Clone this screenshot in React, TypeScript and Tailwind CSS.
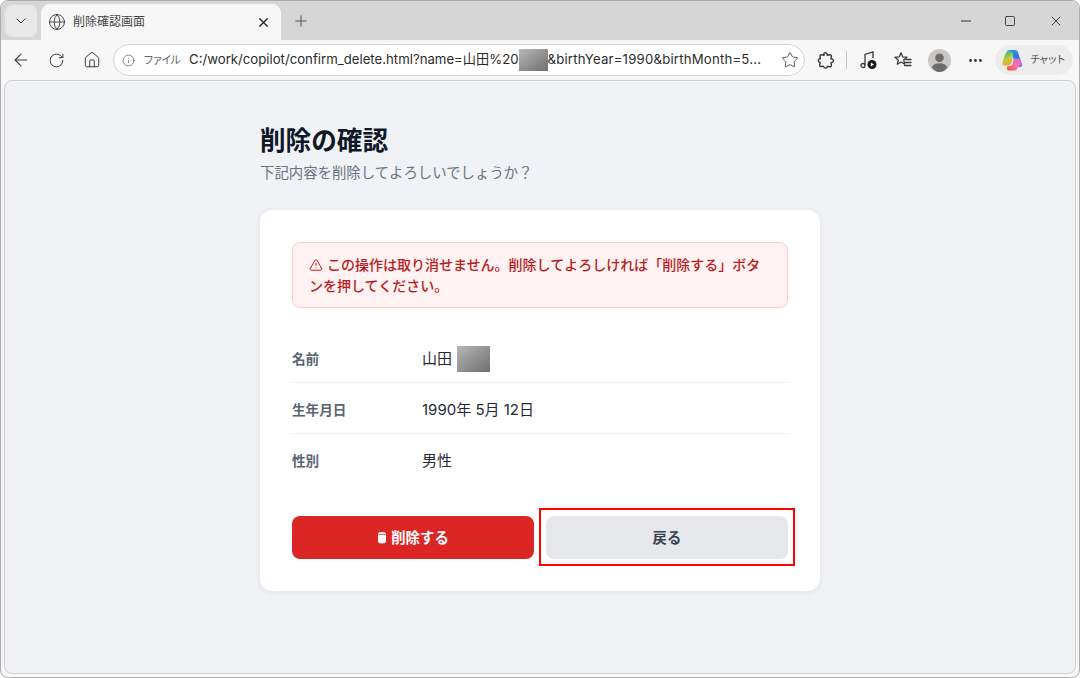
import { ArrowLeft, ChevronDown, Globe, Home, Info, Minus, MoreHorizontal, Plus, RotateCw, Square, Star, TriangleAlert, X } from "lucide-react";

const rows = [
  { label: "名前", value: "山田", redacted: true },
  { label: "生年月日", value: "1990年 5月 12日" },
  { label: "性別", value: "男性" },
];

function Redacted({ className }: { className: string }) {
  return <span className={`inline-block bg-gradient-to-br from-[#b8b8b8] to-[#6f6f6f] ${className}`} />;
}

function PuzzleIcon() {
  return (
    <svg width="18" height="18" viewBox="0 0 18 18" fill="none" stroke="#3a3a3a" strokeWidth="1.4" strokeLinejoin="round">
      <path d="M7 2.2c1.2-1 3-.4 3.2 1.2l.1.9 2.6-.5c1-.2 1.7.6 1.5 1.5l-.5 2.4 1 .2c1.8.4 2 2.9.3 3.5l-1.3.4.5 2.3c.2 1-.6 1.8-1.6 1.6l-2.3-.5-.4.9c-.6 1.5-3 1.4-3.4-.2l-.2-.8-2.2.4c-1 .2-1.8-.6-1.6-1.6l.5-2.4-.9-.4c-1.5-.7-1.3-3 .3-3.4l.8-.2-.4-2.2c-.2-1 .6-1.7 1.6-1.5l2.4.5z" />
    </svg>
  );
}

function MusicIcon() {
  return (
    <svg width="20" height="20" viewBox="0 0 20 20" fill="none" stroke="#3a3a3a" strokeWidth="1.3">
      <circle cx="4" cy="15.5" r="2" />
      <path d="M6 15.5V4.500L14 2v6" />
      <circle cx="13" cy="14.5" r="4.5" fill="#1a1a1a" stroke="none" />
      <path d="M11.8 12.500v4l3.2-2z" fill="#fff" stroke="none" />
    </svg>
  );
}

function FavoritesIcon() {
  return (
    <svg width="18" height="18" viewBox="0 0 18 18" fill="none" stroke="#3a3a3a" strokeWidth="1.3" strokeLinejoin="round">
      <path d="M7 1.8l1.700 4 4.300.4-3.300 2.800 1 4.200L7 11l-3.700 2.200 1-4.200L1 6.200l4.300-.4z" />
      <path d="M12 8.500h5M11.500 11.500h5.500M10.500 14.500h6.500" strokeLinecap="round" />
    </svg>
  );
}

function AvatarIcon() {
  return (
    <svg width="23" height="23" viewBox="0 0 23 23">
      <circle cx="11.5" cy="11.5" r="11.5" fill="#c9c6c3" />
      <circle cx="11.5" cy="8.8" r="4.3" fill="#6e6b69" />
      <path d="M3.800 18.500c1-3 4-4.300 7.700-4.300s6.700 1.300 7.700 4.300c-2 2.700-4.700 4.500-7.700 4.500s-5.700-1.800-7.700-4.500z" fill="#6e6b69" />
    </svg>
  );
}

function CopilotIcon() {
  return (
    <svg width="23" height="23" viewBox="0 0 23 23">
      <defs>
        <linearGradient id="copilotA" x1="0" y1="0" x2="1" y2="1">
          <stop offset="0" stopColor="#27b5e8" />
          <stop offset="0.55" stopColor="#2f6fe6" />
          <stop offset="1" stopColor="#9a55e0" />
        </linearGradient>
        <linearGradient id="copilotB" x1="0.2" y1="0" x2="0.6" y2="1">
          <stop offset="0" stopColor="#39b56a" />
          <stop offset="0.5" stopColor="#b8cf3f" />
          <stop offset="1" stopColor="#f5a52f" />
        </linearGradient>
        <linearGradient id="copilotC" x1="0" y1="1" x2="1" y2="0">
          <stop offset="0" stopColor="#f0503c" />
          <stop offset="0.55" stopColor="#f277a8" />
          <stop offset="1" stopColor="#c46ae0" />
        </linearGradient>
      </defs>
      <path d="M8 1h6c1.400 0 2.400.8 2.800 2.100l4.300 12.400c.4 1.300-.5 2.500-1.900 2.500h-4.400L11.300 5.300C10.900 4 10 3.300 8.600 3.300H5.500C5.900 2 6.800 1 8 1z" fill="url(#copilotA)" />
      <path d="M6.800 3.300h3.200c1.200 0 2 .6 2.300 1.800l-2 9c-.4 1.500-1.500 2.400-3 2.400H3.300C1.800 16.500.8 15.200 1.300 13.700L4.400 5c.4-1.100 1.300-1.700 2.400-1.700z" fill="url(#copilotB)" />
      <path d="M13 9.500h4.500c.9 0 1.500.5 1.800 1.300l.9 3c.5 1.600-.5 3-2 3.200l-2.500 3.300c-.6.800-1.300 1.200-2.200 1.200H7.800c-1.400 0-2.300-1.300-1.900-2.600l.7-1.900h1.900c1.500 0 2.700-.9 3.100-2.400z" fill="url(#copilotC)" />
    </svg>
  );
}

export default function App() {
  return (
    <div className="relative flex h-[678px] w-[1080px] flex-col overflow-hidden bg-white font-['Inter','Noto_Sans_CJK_JP',sans-serif]">
      {/* Window frame */}
      <div className="flex h-full flex-col overflow-hidden rounded-[8px] border border-[#ababab] bg-[#f7f7f7]">
        {/* Tab strip */}
        <div className="flex h-[39px] shrink-0 items-end bg-[#d6d6d6] pl-1">
          <div className="mb-[3px] flex h-[32px] w-[32px] items-center justify-center rounded-[8px] bg-[#e8e8e8]">
            <ChevronDown size={16} strokeWidth={1.5} color="#333" />
          </div>
          <div className="ml-[4px] flex h-[36px] w-[240px] items-center rounded-t-[9px] bg-[#f7f7f7] pl-[7px] pr-[10px]">
            <Globe size={18} strokeWidth={1.2} color="#3a3a3a" />
            <span className="ml-[7px] flex-1 text-[12px] text-[#444]">削除確認画面</span>
            <X size={15} strokeWidth={2} color="#222" />
          </div>
          <div className="ml-[11px] mb-[10px] flex h-[18px] w-[18px] items-center justify-center">
            <Plus size={20} strokeWidth={1.4} color="#555" />
          </div>
          <div className="mb-[11px] ml-auto flex items-center pr-[15px]">
            <Minus size={16} strokeWidth={1.5} color="#333" />
            <Square size={12} strokeWidth={1.8} color="#333" className="ml-[30px] rounded-[2px]" />
            <X size={16} strokeWidth={1.4} color="#333" className="ml-[32px]" />
          </div>
        </div>

        {/* Toolbar */}
        <div className="flex h-[40px] shrink-0 items-center pl-[10px]">
          <ArrowLeft size={20} strokeWidth={1.3} color="#3a3a3a" />
          <RotateCw size={17} strokeWidth={1.4} color="#3a3a3a" className="ml-[17px]" />
          <Home size={18} strokeWidth={1.3} color="#3a3a3a" className="ml-[18px]" />
          <div className="ml-[12px] flex h-[32px] w-[692px] items-center rounded-full border border-[#d2d2d2] bg-white pl-[8px] pr-[5px]">
            <Info size={13} strokeWidth={1.5} color="#666" />
            <span className="ml-[8px] w-[46px] text-[11px] tracking-[-2px] text-[#666]">ファイル</span>
            <span className="flex items-center text-[13.2px] whitespace-nowrap text-[#2b2b2b]">
              C:/work/copilot/confirm_delete.html?name=山田%20
              <Redacted className="h-[22px] w-[29px]" />
              <span className="tracking-[0.2px]">&amp;birthYear=1990&amp;birthMonth=5...</span>
            </span>
            <Star size={18} strokeWidth={1.3} color="#555" className="ml-auto" />
          </div>
          <div className="ml-[12px]"><PuzzleIcon /></div>
          <div className="ml-[11px] h-[18px] w-px bg-[#c4c4c4]" />
          <div className="ml-[12px]"><MusicIcon /></div>
          <div className="ml-[15px]"><FavoritesIcon /></div>
          <div className="ml-[16px]"><AvatarIcon /></div>
          <MoreHorizontal size={17} strokeWidth={2} color="#333" className="ml-[16px]" />
          <div className="ml-[11px] flex h-[30px] w-[78px] items-center rounded-full bg-[#ececec] pl-[6px]">
            <CopilotIcon />
            <span className="ml-[6px] text-[10.5px] tracking-[-2px] text-[#555]">チャット</span>
          </div>
        </div>

        {/* Page */}
        <div className="mx-[3px] mb-[3px] flex flex-1 justify-center rounded-[8px] border border-[#cfcfcf] bg-[#f0f2f6]">
          <div className="w-[560px] pt-[43px]">
            <h1 className="text-[25.6px] leading-[34px] font-bold text-[#111827]">削除の確認</h1>
            <p className="mt-[5px] text-[14.4px] leading-[20px] text-[#6b7280]">下記内容を削除してよろしいでしょうか？</p>

            <div className="mt-[27px] rounded-[12px] bg-white p-[32px] shadow-[0_1px_6px_rgba(0,0,0,0.07)]">
              <div className="rounded-[8px] border border-[#fecaca] bg-[#fef2f2] px-[16px] py-[11px] text-[14px] leading-[21px] font-medium text-[#b91c1c]">
                <TriangleAlert size={14} strokeWidth={1.7} className="mr-[4px] mb-[2px] inline-block" />
                この操作は取り消せません。削除してよろしければ「削除する」ボタンを押してください。
              </div>

              <div className="mt-[24px]">
                {rows.map((row, i) => (
                  <div key={row.label} className={`flex h-[51px] items-center pt-[2px] ${i < 2 ? "border-b border-[#f0f1f3]" : ""}`}>
                    <span className="mt-[2px] w-[130px] text-[13.6px] font-semibold text-[#5b6472]">{row.label}</span>
                    <span className="mt-[2px] flex items-center text-[15px] text-[#1f2937]">
                      {row.value}
                      {row.redacted && <Redacted className="ml-[5px] h-[26px] w-[33px]" />}
                    </span>
                  </div>
                ))}
              </div>

              <div className="mt-[31px] grid grid-cols-2 gap-[12px]">
                <button className="flex h-[43px] items-center justify-center gap-[4px] rounded-[8px] bg-[#dc2626] text-[14.4px] font-bold text-white">
                  <svg width="10" height="13" viewBox="0 0 10 13" fill="#fff">
                    <path d="M1 3.2C1 1.8 2.500 1 5 1s4 .8 4 2.200V10.500C9 11.800 7.500 12.500 5 12.500S1 11.800 1 10.500z" />
                    <path d="M1.500 3.400h7" stroke="#dc2626" strokeWidth="0.8" />
                  </svg>
                  削除する
                </button>
                <div className="relative">
                  <button className="flex h-[43px] w-full items-center justify-center rounded-[8px] bg-[#e5e7eb] text-[14.4px] font-bold text-[#374151]">戻る</button>
                  {/* Annotation box */}
                  <div className="absolute -top-[8px] -right-[7px] -bottom-[7px] -left-[7px] border-[2px] border-[#ff0000]" />
                </div>
              </div>
            </div>
          </div>
        </div>
      </div>
    </div>
  );
}
